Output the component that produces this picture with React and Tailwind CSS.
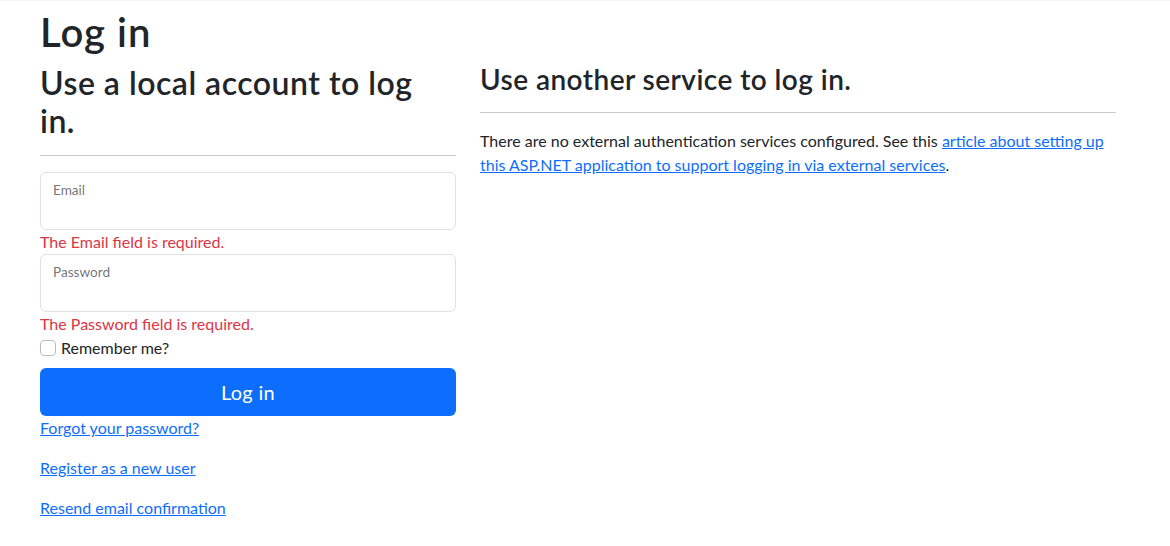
export default function App() {
  return (
    <div className="min-h-screen bg-white text-[#212529] font-['Lato',sans-serif] border-t border-[#f3f3f3]">
      <div className="px-[40px]">
        <h1 className="text-[40px] leading-[48px] font-semibold tracking-[1px] mt-[7px] mb-[4px]">Log in</h1>
        <div className="flex gap-[24px]">
          <div className="w-[416px] shrink-0">
            <h2 className="text-[32px] leading-[38.4px] font-semibold tracking-[0.5px] mt-[4px] mb-[8px]">Use a local account to log<br />in.</h2>
            <hr className="border-t border-[#c8c9ca] mt-[14px] mb-[16px]" />
            <div className="h-[58px] border border-[#dee2e6] rounded-[6px] px-[12px] pt-[7px]">
              <span className="block text-[13.6px] leading-[20px] text-[#212529a6]">Email</span>
            </div>
            <div className="text-[16px] leading-[24px] text-[#dc3545]">The Email field is required.</div>
            <div className="h-[58px] border border-[#dee2e6] rounded-[6px] px-[12px] pt-[7px]">
              <span className="block text-[13.6px] leading-[20px] text-[#212529a6]">Password</span>
            </div>
            <div className="text-[16px] leading-[24px] text-[#dc3545]">The Password field is required.</div>
            <label className="flex items-center gap-[5px] text-[16px] leading-[24px]">
              <span className="w-[16px] h-[16px] border border-[#b8bcc0] rounded-[4px] bg-white"></span>
              Remember me?
            </label>
            <button className="mt-[8px] w-full h-[48px] rounded-[6px] bg-[#0d6efd] text-white text-[20px] tracking-[0.3px]">Log in</button>
            <div className="text-[16px] leading-[24px]">
              <p className="mb-[16px]"><a className="text-[#0d6efd] underline">Forgot your password?</a></p>
              <p className="mb-[16px]"><a className="text-[#0d6efd] underline">Register as a new user</a></p>
              <p><a className="text-[#0d6efd] underline">Resend email confirmation</a></p>
            </div>
          </div>
          <div className="w-[636px] shrink-0">
            <h3 className="text-[28px] leading-[33.6px] font-semibold tracking-[0.45px] mt-[3px]">Use another service to log in.</h3>
            <hr className="border-t border-[#c8c9ca] mt-[15px] mb-[16px]" />
            <p className="text-[16px] leading-[24px] mt-[2px]">
              There are no external authentication services configured. See this{" "}
              <a className="text-[#0d6efd] underline">article about setting up this ASP.NET application to support logging in via external services</a>.
            </p>
          </div>
        </div>
      </div>
    </div>
  );
}
